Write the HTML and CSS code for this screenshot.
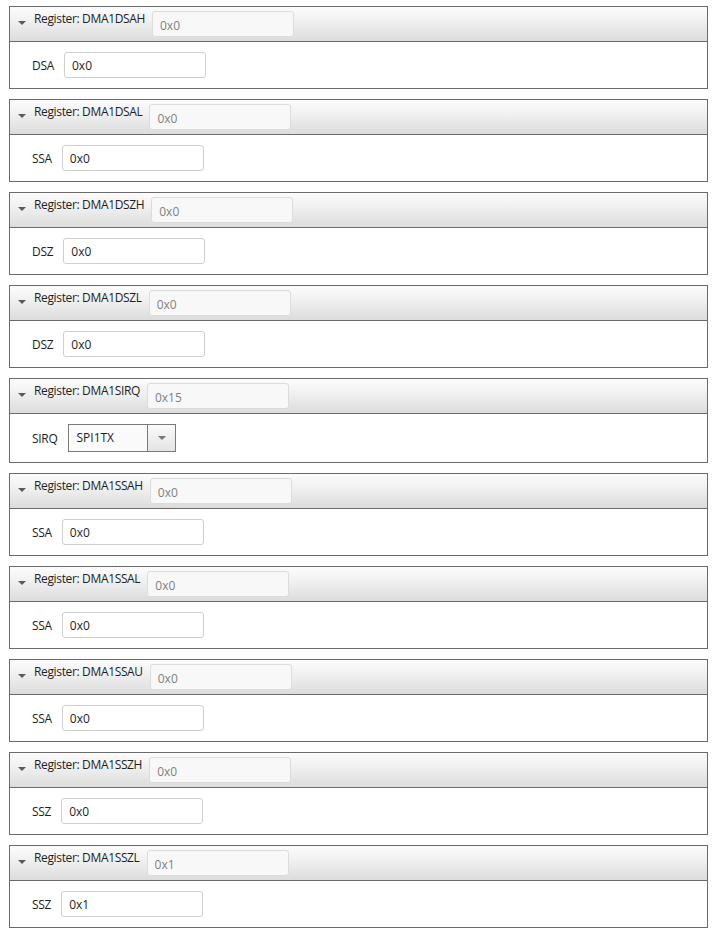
FILE: index.html
```html
<!DOCTYPE html>
<html>
<head>
<meta charset="utf-8">
<link rel="stylesheet" href="styles.css">
</head>
<body>
<div class="list">
  <section class="panel">
    <div class="head"><span class="tri"></span><span class="title">Register: DMA1DSAH</span><input class="hval" value="0x0" readonly></div>
    <div class="body"><label class="lbl">DSA</label><input class="fval" value="0x0"></div>
  </section>
  <section class="panel">
    <div class="head"><span class="tri"></span><span class="title">Register: DMA1DSAL</span><input class="hval" value="0x0" readonly></div>
    <div class="body"><label class="lbl">SSA</label><input class="fval" value="0x0"></div>
  </section>
  <section class="panel">
    <div class="head"><span class="tri"></span><span class="title">Register: DMA1DSZH</span><input class="hval" value="0x0" readonly></div>
    <div class="body"><label class="lbl">DSZ</label><input class="fval" value="0x0"></div>
  </section>
  <section class="panel">
    <div class="head"><span class="tri"></span><span class="title">Register: DMA1DSZL</span><input class="hval" value="0x0" readonly></div>
    <div class="body"><label class="lbl">DSZ</label><input class="fval" value="0x0"></div>
  </section>
  <section class="panel">
    <div class="head"><span class="tri"></span><span class="title">Register: DMA1SIRQ</span><input class="hval" value="0x15" readonly></div>
    <div class="body"><label class="lbl">SIRQ</label>
      <div class="select"><span class="sel-text">SPI1TX</span><span class="sel-btn"><span class="sel-arrow"></span></span></div>
    </div>
  </section>
  <section class="panel">
    <div class="head"><span class="tri"></span><span class="title">Register: DMA1SSAH</span><input class="hval" value="0x0" readonly></div>
    <div class="body"><label class="lbl">SSA</label><input class="fval" value="0x0"></div>
  </section>
  <section class="panel">
    <div class="head"><span class="tri"></span><span class="title">Register: DMA1SSAL</span><input class="hval" value="0x0" readonly></div>
    <div class="body"><label class="lbl">SSA</label><input class="fval" value="0x0"></div>
  </section>
  <section class="panel">
    <div class="head"><span class="tri"></span><span class="title">Register: DMA1SSAU</span><input class="hval" value="0x0" readonly></div>
    <div class="body"><label class="lbl">SSA</label><input class="fval" value="0x0"></div>
  </section>
  <section class="panel">
    <div class="head"><span class="tri"></span><span class="title">Register: DMA1SSZH</span><input class="hval" value="0x0" readonly></div>
    <div class="body"><label class="lbl">SSZ</label><input class="fval" value="0x0"></div>
  </section>
  <section class="panel">
    <div class="head"><span class="tri"></span><span class="title">Register: DMA1SSZL</span><input class="hval" value="0x1" readonly></div>
    <div class="body"><label class="lbl">SSZ</label><input class="fval" value="0x1"></div>
  </section>
</div>
</body>
</html>
```
FILE: styles.css
```css
html, body {
  margin: 0;
  padding: 0;
  background: #ffffff;
}
body {
  font-family: "Open Sans", "Noto Sans", sans-serif;
  font-size: 12px;
  color: #222;
}
.list {
  padding: 6px 9px 0 9px;
  display: flex;
  flex-direction: column;
  gap: 10px;
}
.panel {
  border: 1px solid #6a6a6a;
  background: #fff;
}
.head {
  height: 35px;
  box-sizing: border-box;
  border-bottom: 1px solid #6a6a6a;
  background: linear-gradient(#fcfcfc, #f1f1f1 40%, #dcdcdc);
  display: flex;
  align-items: flex-start;
  padding: 4px 0 0 8px;
}
.tri {
  width: 0;
  height: 0;
  border-left: 4px solid transparent;
  border-right: 4px solid transparent;
  border-top: 4px solid #5a5a5a;
  margin-top: 10px;
  margin-right: 8px;
}
.title {
  line-height: 16px;
  color: #1e1e1e;
  letter-spacing: -0.35px;
}
.hval {
  margin-left: 7px;
  width: 142px;
  height: 26px;
  box-sizing: border-box;
  border: 1px solid #dcdcdc;
  border-radius: 3px;
  background: #f8f8f8;
  font: inherit;
  color: #808080;
  padding: 2px 0 0 7px;
  outline: none;
}
.body {
  display: flex;
  align-items: center;
  padding: 10px 0 10px 22px;
  gap: 10px;
}
.lbl {
  color: #1e1e1e;
  letter-spacing: -0.3px;
  padding-top: 1px;
}
.fval {
  width: 142px;
  height: 26px;
  box-sizing: border-box;
  border: 1px solid #cfcfcf;
  border-radius: 3px;
  background: #fff;
  font: inherit;
  color: #1e1e1e;
  padding: 0 0 0 7px;
  outline: none;
}
.select {
  display: flex;
  width: 108px;
  height: 28px;
  box-sizing: border-box;
  border: 1px solid #7a7a7a;
  background: #fafafa;
  margin-left: 1px;
}
.sel-text {
  flex: 1;
  padding-left: 7px;
  line-height: 26px;
  color: #1e1e1e;
}
.sel-btn {
  width: 27px;
  border-left: 1px solid #7a7a7a;
  background: linear-gradient(#fbfbfb, #e4e4e4);
  display: flex;
  align-items: center;
  justify-content: center;
}
.sel-arrow {
  width: 0;
  height: 0;
  border-left: 4px solid transparent;
  border-right: 4px solid transparent;
  border-top: 4px solid #777;
}
```
